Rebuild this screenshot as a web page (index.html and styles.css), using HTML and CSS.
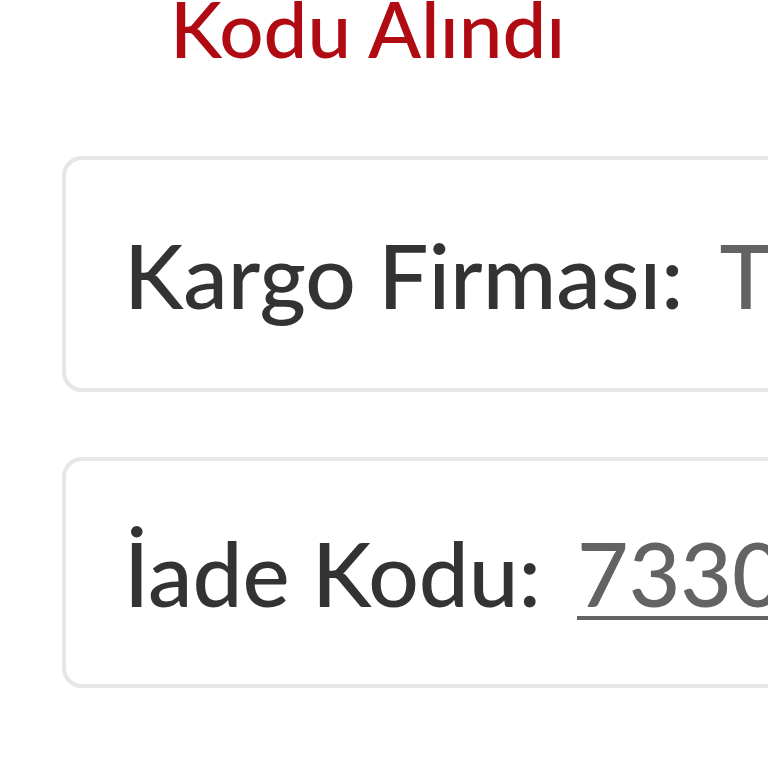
FILE: index.html
```html
<!DOCTYPE html>
<html lang="tr">
<head>
<meta charset="utf-8">
<link rel="stylesheet" href="styles.css">
</head>
<body>
<div class="page">
  <h1 class="title">Kodu Alındı</h1>
  <div class="card">
    <span class="label">Kargo Firması:</span>
    <span class="value">T</span>
  </div>
  <div class="card">
    <span class="label">İade Kodu:</span>
    <span class="value code">7330</span>
  </div>
</div>
</body>
</html>
```
FILE: styles.css
```css
html, body {
  margin: 0;
  padding: 0;
  background: #ffffff;
  overflow: hidden;
}
.page {
  width: 1200px;
  padding-left: 62px;
  font-family: "Lato", "Liberation Sans", sans-serif;
}
.title {
  margin: -20px 0 0 108px;
  font-size: 78px;
  font-weight: 500;
  line-height: 96px;
  color: #b00a12;
}
.card {
  box-sizing: border-box;
  margin-top: 80px;
  width: 1000px;
  height: 236px;
  border: 4px solid #e6e6e6;
  border-radius: 20px;
  display: flex;
  align-items: center;
  padding-left: 58px;
  font-size: 89px;
  font-weight: 500;
  line-height: 1;
}
.card + .card {
  margin-top: 65px;
  height: 231px;
}
.label {
  color: #333333;
}
.value {
  margin-left: 36px;
  color: #636363;
}
.code {
  text-decoration: underline;
  text-decoration-thickness: 4px;
  text-underline-offset: 9px;
}
```
